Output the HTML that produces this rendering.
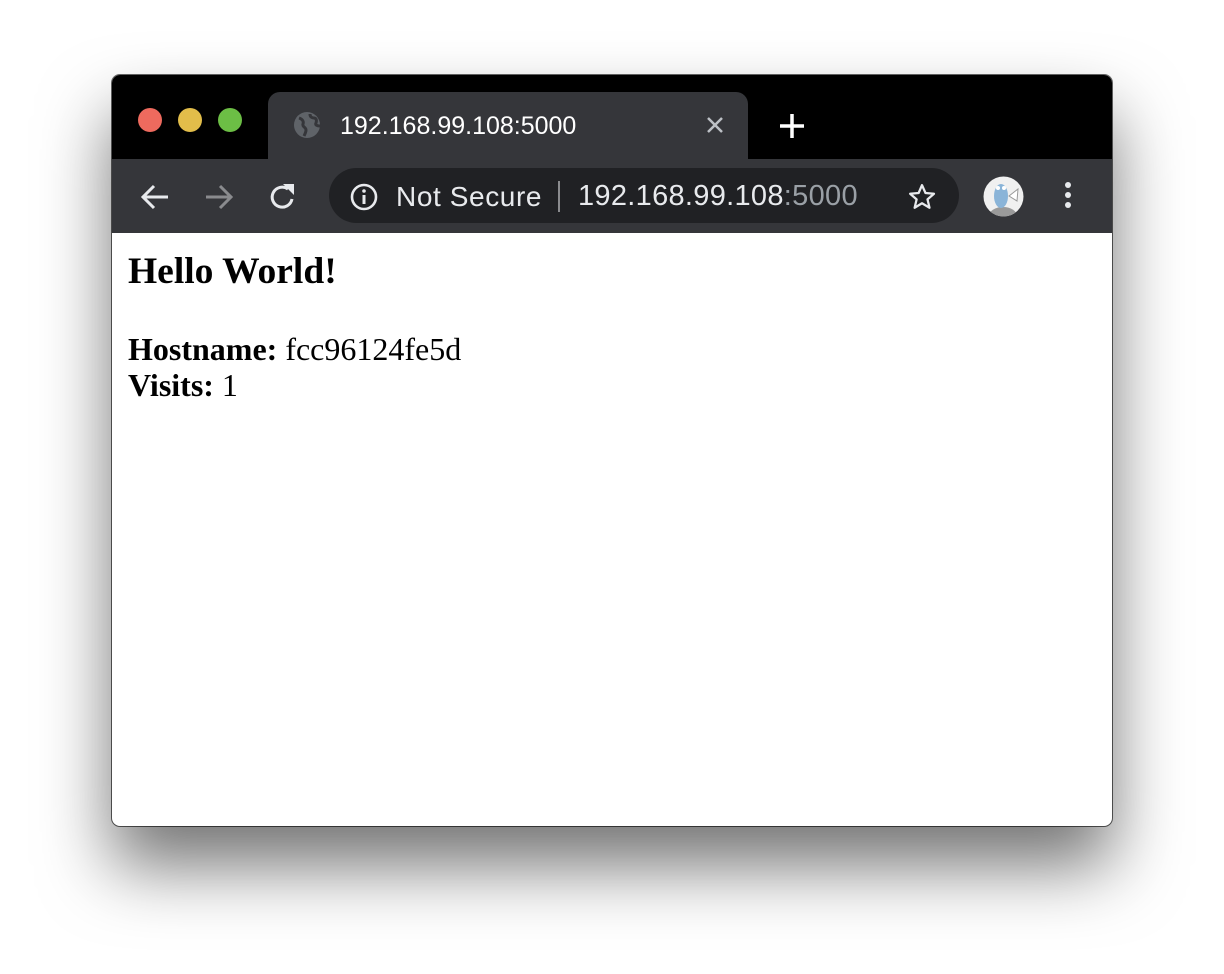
<!DOCTYPE html>
<html><head><style>
body{margin:0;width:1224px;height:974px;background:#fff;position:relative;overflow:hidden;font-family:"Liberation Sans",sans-serif}
.win{position:absolute;left:112px;top:75px;width:1000px;height:751px;border-radius:8px;overflow:hidden;background:#fff;box-shadow:0 40px 70px rgba(0,0,0,.55),0 0 0 1px rgba(0,0,0,.6)}
.tabs{position:absolute;left:0;top:0;width:1000px;height:84px;background:#000}
.dot{position:absolute;top:33px;width:24px;height:24px;border-radius:50%}
.tab{position:absolute;left:156px;top:17px;width:480px;height:67px;background:#35363a;border-radius:12px 12px 0 0}
.tool{position:absolute;left:0;top:84px;width:1000px;height:74px;background:#35363a}
.omni{position:absolute;left:217px;top:9px;width:630px;height:55px;border-radius:28px;background:#202124}
.t{position:absolute;color:#e8eaed;font-size:26px;white-space:nowrap}
.content{position:absolute;left:0;top:158px;width:1000px;height:593px;font-family:"Liberation Serif",serif;color:#000}
</style></head><body>
<div class="win">
 <div class="tabs">
  <div class="dot" style="left:26px;background:#ee6a5e"></div>
  <div class="dot" style="left:66px;background:#e2bd4a"></div>
  <div class="dot" style="left:106px;background:#6cbe45"></div>
  <div class="tab">
   <svg style="position:absolute;left:25px;top:19px" width="28" height="28" viewBox="0 0 28 28"><circle cx="14" cy="14" r="13" fill="#5f6368"/><path d="M6 7c3 1 5 3 4 6s3 3 3 6c0 2-1 4-2 6M17 3c0 3 2 4 4 4s3 2 2 5c-1 2 1 3 4 3" stroke="#35363a" stroke-width="3" fill="none"/></svg>
   <div class="t" style="left:72px;top:20px;color:#fff;font-size:25px">192.168.99.108:5000</div>
   <svg style="position:absolute;left:438px;top:24px" width="18" height="18"><path d="M2 2L16 16M16 2L2 16" stroke="#bdc1c6" stroke-width="2.5"/></svg>
  </div>
  <svg style="position:absolute;left:667px;top:38px" width="26" height="26"><path d="M13 1V25M1 13H25" stroke="#fff" stroke-width="3.5"/></svg>
 </div>
 <div class="tool">
  <svg style="position:absolute;left:28px;top:25px" width="30" height="26"><path d="M28 13H4M14 2L3 13L14 24" stroke="#e8eaed" stroke-width="3" fill="none"/></svg>
  <svg style="position:absolute;left:92px;top:25px" width="30" height="26"><path d="M2 13H26M16 2L27 13L16 24" stroke="#8a8b8e" stroke-width="3" fill="none"/></svg>
  <svg style="position:absolute;left:156px;top:23px" width="30" height="30"><path d="M24 17A10 10 0 1 1 20 7" stroke="#e8eaed" stroke-width="3" fill="none"/><path d="M15 2H26V13Z" fill="#e8eaed"/></svg>
  <div class="omni">
   <svg style="position:absolute;left:21px;top:15px" width="28" height="28"><circle cx="14" cy="14" r="12" stroke="#e8eaed" stroke-width="2.6" fill="none"/><path d="M14 12V21" stroke="#e8eaed" stroke-width="3"/><circle cx="14" cy="8" r="1.8" fill="#e8eaed"/></svg>
   <div class="t" style="left:67px;top:13px;font-size:28px;letter-spacing:0.6px">Not Secure</div>
   <div style="position:absolute;left:229px;top:13px;width:2px;height:31px;background:#8a8b8e"></div>
   <div class="t" style="left:249px;top:12px;font-size:29px;letter-spacing:0.3px">192.168.99.108<span style="color:#9aa0a6">:5000</span></div>
   <svg style="position:absolute;left:578px;top:14px" width="30" height="30" viewBox="0 0 24 24"><path d="M12 2.5l2.8 6.3 6.8.6-5.2 4.5 1.6 6.7L12 17l-5.9 3.6 1.6-6.7L2.5 9.4l6.8-.6z" stroke="#e8eaed" stroke-width="1.8" fill="none" stroke-linejoin="round"/></svg>
  </div>
  <svg style="position:absolute;left:871px;top:17px" width="41" height="41"><defs><clipPath id="c"><circle cx="20.5" cy="20.5" r="20"/></clipPath></defs><g clip-path="url(#c)"><rect width="41" height="41" fill="#f0f0f0"/><ellipse cx="20" cy="40" rx="14" ry="9" fill="#9a9a9a"/><ellipse cx="18" cy="20" rx="7" ry="12" fill="#8ab4d8"/><circle cx="15" cy="12" r="2" fill="#fff"/><circle cx="21" cy="12" r="2" fill="#fff"/><path d="M26 20L35 13L34 25Z" fill="#fff" stroke="#999"/></g></svg>
  <div style="position:absolute;left:953px;top:23px;width:6px;height:6px;border-radius:50%;background:#e8eaed;box-shadow:0 10px 0 #e8eaed,0 20px 0 #e8eaed"></div>
 </div>
 <div class="content">
  <div style="position:absolute;left:16px;top:17px;font-size:37.5px;font-weight:bold">Hello World!</div>
  <div style="position:absolute;left:16px;top:98px;font-size:32px;line-height:36px"><b>Hostname:</b> fcc96124fe5d<br><b>Visits:</b> 1</div>
 </div>
</div>
</body></html>
